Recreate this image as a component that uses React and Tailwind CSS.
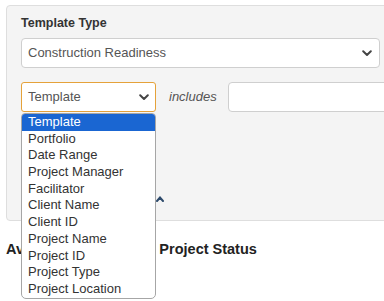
import React from 'react';

const options = [
    'Template',
    'Portfolio',
    'Date Range',
    'Project Manager',
    'Facilitator',
    'Client Name',
    'Client ID',
    'Project Name',
    'Project ID',
    'Project Type',
    'Project Location',
];

const ChevronDown = ({ className }) => (
    <svg className={className} width="10" height="7" viewBox="0 0 10 7" fill="none">
        <path d="M1.2 1.3 L5 5 L8.8 1.3" stroke="#444" strokeWidth="2" strokeLinecap="round" strokeLinejoin="round" />
    </svg>
);

const App = () => {
    return (
        <div className="relative w-[384px] h-[301px] overflow-hidden bg-white font-['Liberation_Sans',Arial,sans-serif] text-[#333]">
            {/* Filter panel */}
            <div className="ml-[6px] mt-[5px] w-[420px] h-[216px] bg-[#f4f4f4] border border-[#dedede] rounded-[4px] pl-[14px] pt-[8px]">
                <div className="h-[18px] leading-[18px] text-[12.5px] font-bold text-[#333]">Template Type</div>

                <div className="mt-[6px] w-[359px] h-[30px] bg-white border border-[#cfcfcf] rounded-[4px] flex items-center justify-between pl-[6px] pr-[7px]">
                    <span className="text-[13px] text-[#555]">Construction Readiness</span>
                    <ChevronDown />
                </div>

                <div className="mt-[14px] flex items-center">
                    <div className="w-[135px] h-[30px] bg-white border border-[#e5a23a] rounded-[3px] flex items-center justify-between pl-[6px] pr-[6px]">
                        <span className="text-[13px] text-[#555]">Template</span>
                        <ChevronDown />
                    </div>
                    <span className="ml-[13px] text-[13px] italic text-[#555]">includes</span>
                    <div className="ml-[11px] w-[180px] h-[30px] bg-white border border-[#cfcfcf] rounded-[4px]" />
                </div>

                {/* collapsed link hidden behind the open list */}
                <div className="mt-[84px] pl-[135px] h-[8px]">
                    <svg width="8" height="6" viewBox="0 0 8 6" fill="none">
                        <path d="M1 5 L4 1.5 L7 5" stroke="#2d4a6b" strokeWidth="2" strokeLinecap="round" />
                    </svg>
                </div>
            </div>

            <div className="ml-[6px] mt-[19px] text-[14.5px] font-bold text-[#222] leading-[18px]">
                Average Durations by Project Status
            </div>

            {/* Open select list */}
            <div className="absolute left-[21px] top-[113px] w-[135px] bg-white border border-[#a6a6a6] rounded-b-[5px] rounded-t-[4px] overflow-hidden">
                {options.map((opt, i) => (
                    <div
                        key={opt}
                        className={
                            i === 0
                                ? 'h-[16.7px] leading-[16.7px] pl-[6px] text-[13px] bg-[#1a66d2] text-white'
                                : 'h-[16.7px] leading-[16.7px] pl-[6px] text-[13px] text-[#333]'
                        }
                    >
                        {opt}
                    </div>
                ))}
            </div>
        </div>
    );
};

export default App;
